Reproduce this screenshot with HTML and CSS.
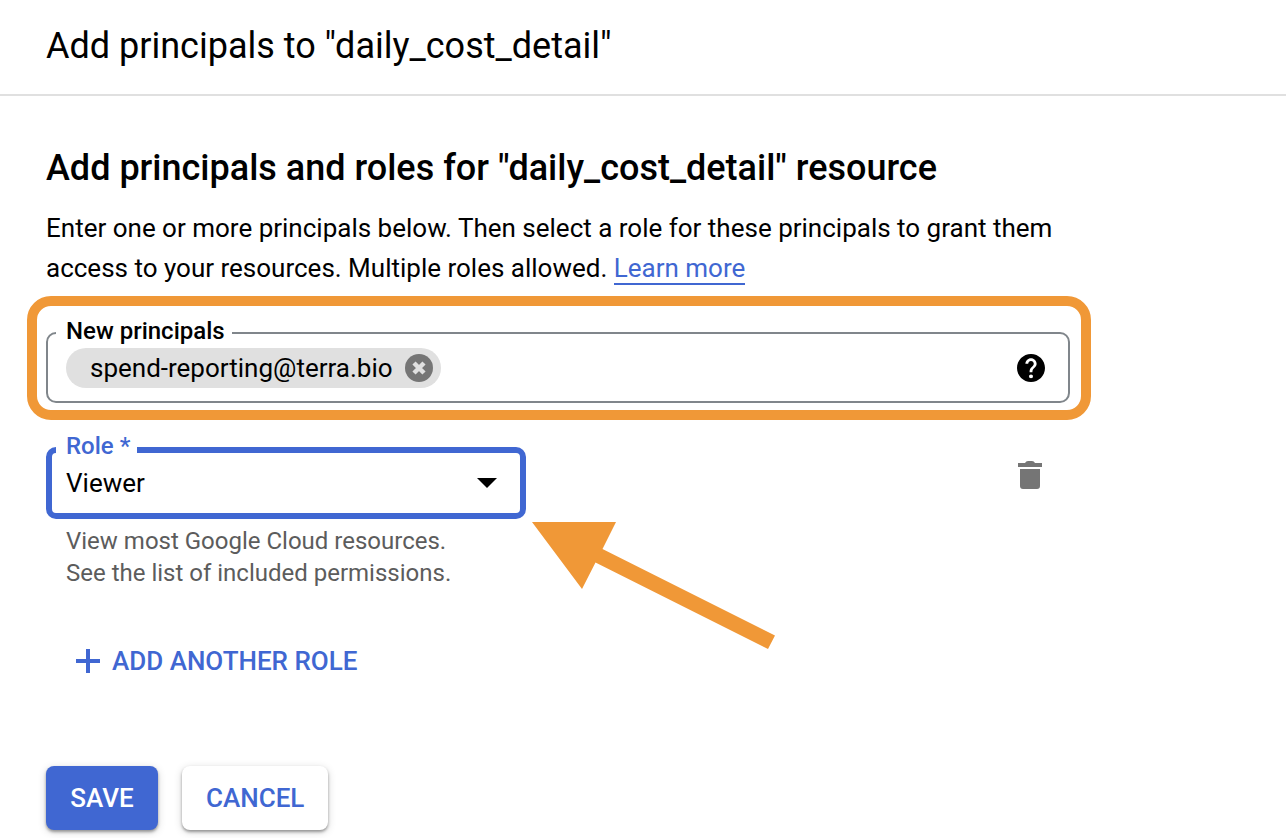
FILE: index.html
```html
<!DOCTYPE html>
<html lang="en">
<head>
<meta charset="utf-8">
<meta name="viewport" content="width=device-width, initial-scale=1">
<title>Add principals</title>
<link rel="stylesheet" href="styles.css">
</head>
<body>
<header class="page-header">
  <h1 class="page-title">Add principals to "daily_cost_detail"</h1>
</header>
<main class="content">
  <form class="form">
    <h2 class="heading">Add principals and roles for "daily_cost_detail" resource</h2>
    <p class="intro">Enter one or more principals below. Then select a role for these principals to grant them access to your resources. Multiple roles allowed. <a class="link" href="#">Learn more</a></p>

    <div class="highlight">
      <div class="field">
        <label class="field-label" for="principals">New principals</label>
        <span class="chip">spend-reporting@terra.bio
          <button class="chip-remove" type="button" aria-label="Remove">
            <svg width="28" height="28" viewBox="0 0 28 28"><circle cx="14" cy="14" r="14" fill="#757575"/><path d="M9 9l10 10M19 9L9 19" stroke="#e0e0e0" stroke-width="4.500"/></svg>
          </button>
        </span>
        <input class="principal-input" id="principals" type="text">
        <button class="icon-button" type="button" aria-label="Help">
          <svg width="28" height="28" viewBox="2 2 20 20"><path d="M12 2C6.480 2 2 6.480 2 12s4.480 10 10 10 10-4.480 10-10S17.520 2 12 2zm1 17h-2v-2h2v2zm2.070-7.750l-.9.920C13.450 12.900 13 13.500 13 15h-2v-.5c0-1.100.45-2.100 1.170-2.830l1.240-1.260c.37-.36.59-.86.59-1.410 0-1.100-.9-2-2-2s-2 .9-2 2H8c0-2.210 1.790-4 4-4s4 1.790 4 4c0 .88-.36 1.680-.93 2.250z"/><circle cx="12" cy="18" r="1.300" fill="#fff"/></svg>
        </button>
      </div>
    </div>

    <div class="role-row">
      <div class="role">
        <div class="field field-active">
          <label class="field-label" for="role">Role *</label>
          <select class="role-select" id="role"><option>Viewer</option></select>
          <svg class="caret" width="20" height="10" viewBox="0 0 20 10"><path d="M0 0h20L10 10z"/></svg>
        </div>
        <p class="hint">View most Google Cloud resources.<br>See the list of included permissions.</p>
        <svg class="pointer" width="244" height="128" viewBox="0 0 244 128"><path d="M0 0H84L70.500 27L243 113.500L236 127L63.500 40.500L50 67z" fill="#f09837"/></svg>
      </div>
      <button class="icon-button delete" type="button" aria-label="Delete role">
        <svg width="24" height="28" viewBox="0 0 24 28"><path d="M0 2h7q1-2 3-2h4q2 0 3 2h7v4H0zM2 8h20v17a3 3 0 0 1-3 3H5a3 3 0 0 1-3-3z" fill="#757575"/></svg>
      </button>
    </div>

    <button class="add-role" type="button">
      <svg width="24" height="24" viewBox="0 0 24 24"><path d="M10 0h4v10h10v4H14v10h-4V14H0v-4h10z" fill="#4067d2"/></svg>
      ADD ANOTHER ROLE
    </button>

    <div class="actions">
      <button class="button button-primary" type="submit">SAVE</button>
      <button class="button" type="button">CANCEL</button>
    </div>
  </form>
</main>
</body>
</html>
```

FILE: styles.css
```css
* { box-sizing: border-box; }
body {
  margin: 0;
  background: #fff;
  color: #000;
  font: 400 26px/40px Roboto, "Liberation Sans", sans-serif;
}
button, input, select { font: inherit; color: inherit; }
button { border: 0; background: none; padding: 0; cursor: pointer; }
svg { display: block; }
.page-header { padding: 22px 46px 24px; border-bottom: 2px solid #e0e0e0; }
.page-title, .heading { margin: 0; font-size: 36px; line-height: 48px; }
.page-title { font-weight: 400; }
.heading { font-weight: 500; }
.content { padding: 48px 46px 8px; }
.form { max-width: 1024px; }
.intro { margin: 16px 0 8px; }
.link { color: #4067d2; text-decoration: none; border-bottom: 2px solid #4067d2; }
.highlight {
  margin: 0 -21px 0 -19px;
  padding: 26px 11px 7px 9px;
  border: 10px solid #f09837;
  border-radius: 24px;
}
.field {
  position: relative;
  display: flex;
  align-items: center;
  min-height: 71px;
  padding: 0 23px 0 18px;
  border: 2px solid #80868b;
  border-radius: 10px;
}
.field-label {
  position: absolute;
  top: -19px;
  left: 8px;
  padding: 0 7px 0 10px;
  background: #fff;
  font-size: 24px;
  line-height: 32px;
  font-weight: 500;
}
.chip {
  display: flex;
  align-items: center;
  gap: 12px;
  height: 40px;
  padding: 0 8px 0 24px;
  border-radius: 20px;
  background: #e0e0e0;
}
.principal-input {
  flex: 1;
  min-width: 0;
  margin: 0 8px;
  border: 0;
  outline: 0;
  background: none;
}
.role-row { display: flex; justify-content: space-between; align-items: flex-start; margin-top: 27px; }
.role { position: relative; flex: 0 1 480px; }
.field-active { min-height: 72px; padding: 0; border: 6px solid #4067d2; }
.field-active .field-label { top: -23px; left: 4px; color: #4067d2; }
.role-select {
  flex: 1;
  height: 60px;
  padding: 0 48px 0 14px;
  border: 0;
  outline: 0;
  background: none;
  appearance: none;
}
.caret { position: absolute; right: 23px; top: 25px; pointer-events: none; }
.hint { margin: 6px 0 0; padding-left: 20px; color: #5c5c5c; font-size: 24px; line-height: 32px; }
.pointer { position: absolute; left: 486px; top: 75px; pointer-events: none; }
.delete { margin: 14px 28px 0 0; }
.add-role {
  display: flex;
  align-items: center;
  gap: 12px;
  margin: 52px 0 0 30px;
  color: #4067d2;
  font-weight: 500;
}
.actions { display: flex; gap: 24px; margin-top: 85px; }
.button {
  min-width: 112px;
  height: 64px;
  padding: 0 24px;
  border-radius: 8px;
  background: #fff;
  color: #4067d2;
  font-weight: 500;
  box-shadow: 0 2px 3px rgba(0, 0, 0, .35), 0 2px 8px rgba(0, 0, 0, .16);
}
.button-primary { background: #4067d2; color: #fff; }
```
